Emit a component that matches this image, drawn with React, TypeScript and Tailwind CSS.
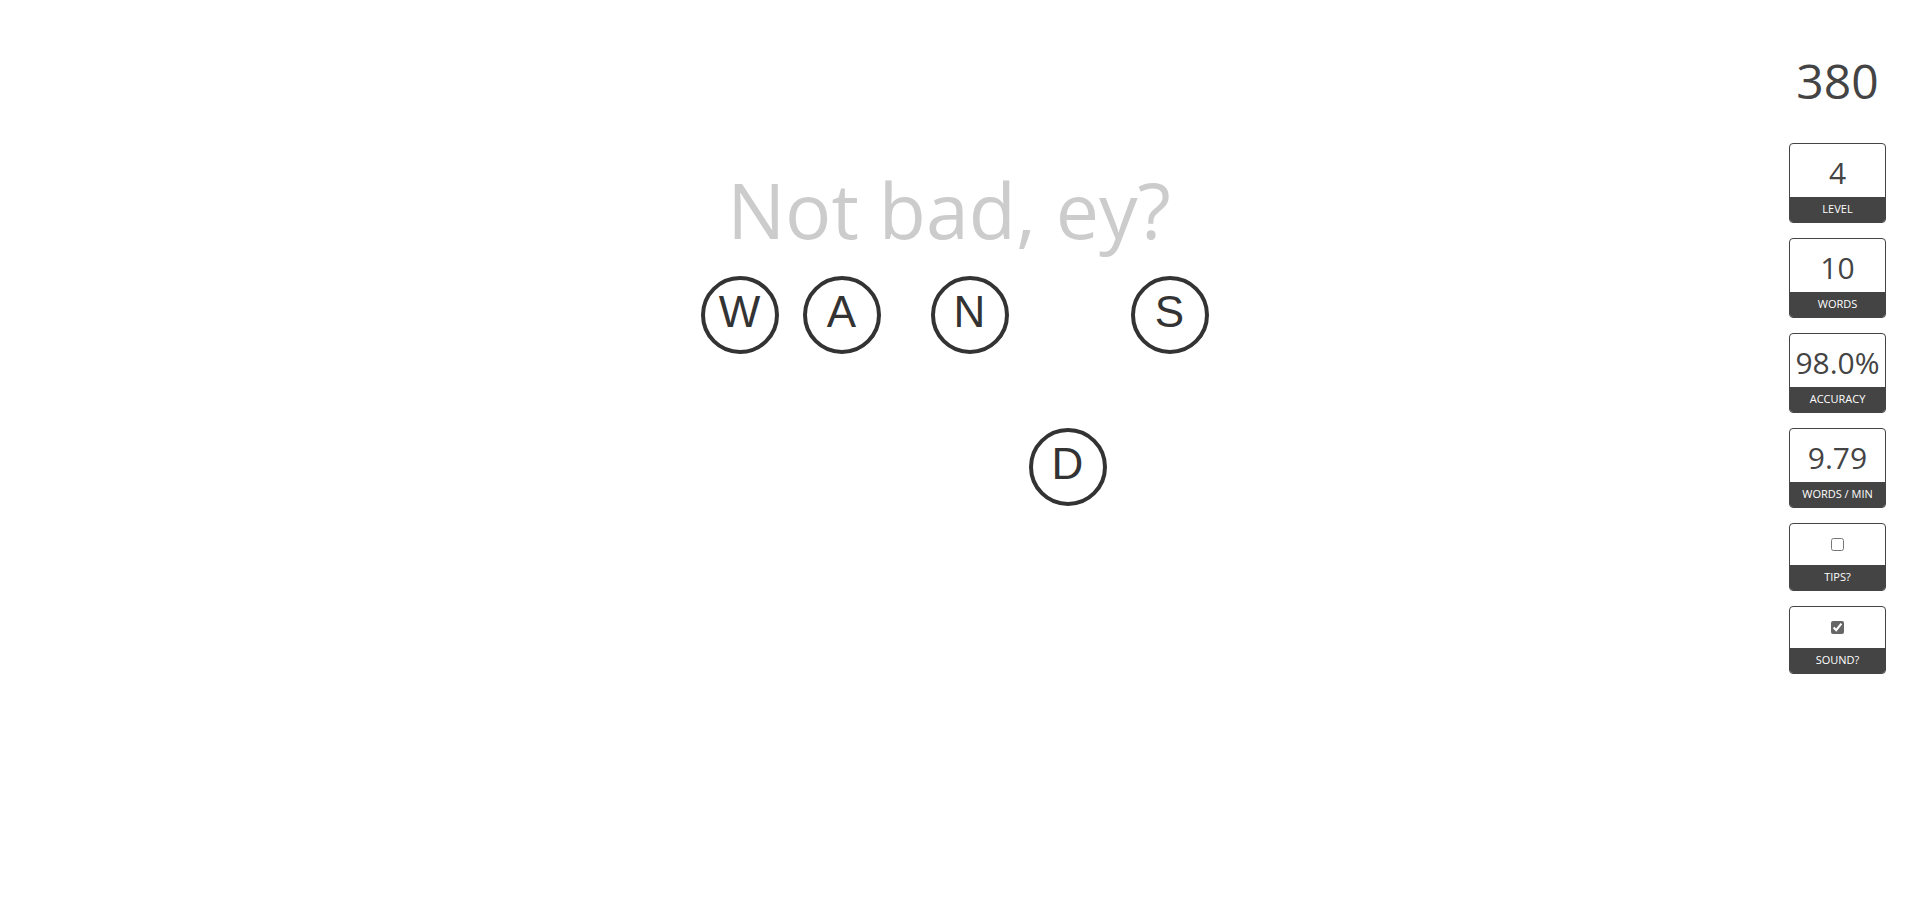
const letters = [
  { ch: "W", left: 48, top: 28 },
  { ch: "A", left: 150, top: 28 },
  { ch: "N", left: 278, top: 28 },
  { ch: "S", left: 478, top: 28 },
  { ch: "D", left: 376, top: 180 },
];

const stats = [
  { label: "LEVEL", value: "4" },
  { label: "WORDS", value: "10" },
  { label: "ACCURACY", value: "98.0%" },
  { label: "WORDS / MIN", value: "9.79" },
];

const StatBox = ({ label, children, tall }: { label: string; children: React.ReactNode; tall?: boolean }) => (
  <div className="w-[97px] border border-[#444] rounded-[4px] overflow-hidden bg-white">
    <div className={`${tall ? "h-[53px] pt-[4px]" : "h-[41px]"} flex items-center justify-center`}>{children}</div>
    <div className="h-[25px] bg-[#444] text-white text-[11px] flex items-center justify-center">{label}</div>
  </div>
);

export default function App() {
  return (
    <div className="min-h-screen bg-white grid grid-cols-[116px_1fr_116px] font-['Open_Sans','Noto_Sans',sans-serif]">
      <div />

      <main className="pt-[171px]">
        <h1 className="text-center pr-[7px] text-[77px] leading-[77px] text-[#cccccc] font-normal">Not bad, ey?</h1>
        <div className="relative w-[600px] h-[300px] mx-auto">
          {letters.map((l) => (
            <div
              key={l.ch}
              className="absolute w-[78px] h-[78px] rounded-full border-4 border-[#333] flex items-center justify-center pb-[6px] text-[44px] leading-none text-[#333] font-['Liberation_Sans',Arial,sans-serif]"
              style={{ left: l.left, top: l.top }}
            >
              {l.ch}
            </div>
          ))}
        </div>
      </main>

      <aside className="flex flex-col items-end pr-[19px]">
        <div className="w-[97px] flex flex-col items-center gap-[15px] pt-[57px]">
          <div className="text-[48px] leading-[48px] text-[#444] mb-[23px]">380</div>
          {stats.map((s) => (
            <StatBox key={s.label} label={s.label} tall>
              <span className="text-[30px] leading-none text-[#444]">{s.value}</span>
            </StatBox>
          ))}
          <StatBox label="TIPS?">
            <input type="checkbox" className="w-[13px] h-[13px] accent-[#666]" />
          </StatBox>
          <StatBox label="SOUND?">
            <input type="checkbox" defaultChecked className="w-[13px] h-[13px] accent-[#666]" />
          </StatBox>
        </div>
      </aside>
    </div>
  );
}
